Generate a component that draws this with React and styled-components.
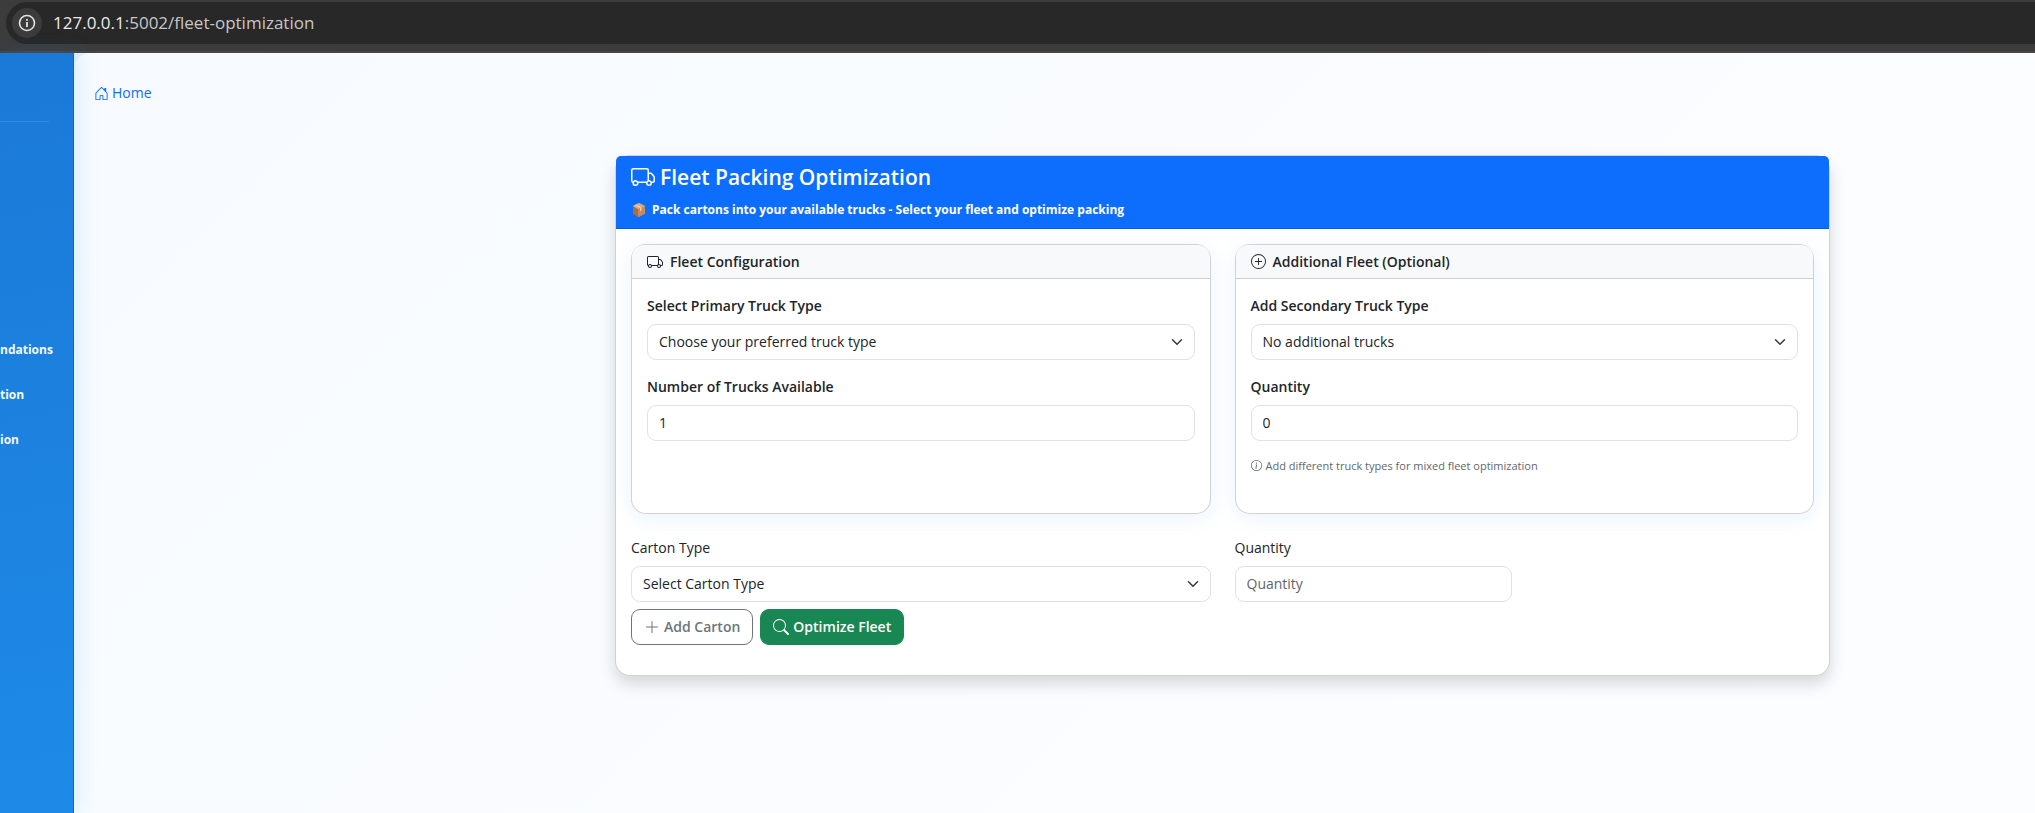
import React from "react";
import styled, { createGlobalStyle } from "styled-components";
import { BsTruck, BsPlusCircle, BsInfoCircle, BsSearch, BsPlusLg, BsHouseDoor } from "react-icons/bs";

const Global = createGlobalStyle`
  *, *::before, *::after { box-sizing: border-box; }
  body {
    margin: 0;
    font-family: "Open Sans", "Noto Sans", sans-serif;
    font-size: 14px;
    line-height: 24px;
    color: #212529;
    background: #e3f2fd;
  }
  button, input, select { font: inherit; color: inherit; }
`;

const Page = styled.div`
  display: flex;
  flex-direction: column;
  min-height: 100vh;
`;

const BrowserBar = styled.header`
  background: #3c3c3c;
  border-bottom: 2px solid #484545;
  padding: 2px 0 7px 6px;
`;

const Address = styled.div`
  display: flex;
  align-items: center;
  gap: 11px;
  height: 42px;
  padding-left: 6px;
  border-radius: 21px 0 0 21px;
  background: #282828;
  color: #c7c7c7;
  font-size: 17px;
`;

const Host = styled.span`
  color: #ececec;
`;

const SiteInfo = styled.button`
  display: grid;
  place-items: center;
  width: 30px;
  height: 30px;
  padding: 0;
  border: 0;
  border-radius: 50%;
  background: #3c3c3c;
  color: #e3e3e3;
`;

const Shell = styled.div`
  flex: 1;
  display: flex;
`;

const Sidebar = styled.nav`
  flex: 0 0 74px;
  border-right: 1px solid #1565c0;
  background: linear-gradient(170deg, #1b79d7 0%, #1e8ae7 100%);
  box-shadow: 4px 0 20px rgba(33, 150, 243, 0.15);
  z-index: 1;
`;

const Brand = styled.div`
  height: 69px;
  margin-right: 24px;
  border-bottom: 1px solid rgba(255, 255, 255, 0.12);
`;

const NavList = styled.ul`
  list-style: none;
  margin: 0;
  padding: 216px 0 0;
`;

const NavItem = styled.li`
  height: 45px;
`;

const NavLink = styled.a`
  display: block;
  color: #f4f9fe;
  font-size: 12px;
  font-weight: 700;
  text-decoration: none;
`;

const Main = styled.main`
  flex: 1;
  min-width: 0;
  padding: 28px 20px 40px;
  border-radius: 16px 0 0 0;
  background: linear-gradient(135deg, #f7fbff 0%, #fcfdff 100%);
`;

const HomeLink = styled.a`
  display: inline-flex;
  align-items: center;
  gap: 3px;
  color: #0d6efd;
  text-decoration: none;
`;

const Columns = styled.div`
  display: grid;
  grid-template-columns: 521fr 1215fr 185fr;
  margin-top: 47px;
`;

const Card = styled.section`
  grid-column: 2;
  border: 1px solid rgba(0, 0, 0, 0.175);
  border-radius: 15px;
  background: #fff;
  box-shadow: 0 8px 16px rgba(0, 0, 0, 0.15);
`;

const CardHeader = styled.header`
  padding: 7px 15px 6px;
  border-bottom: 1px solid #0b5cd5;
  border-radius: 5px 5px 0 0;
  background: #0d6efd;
  color: #fff;
`;

const Title = styled.h1`
  display: flex;
  align-items: center;
  gap: 5px;
  margin: 0 0 6px;
  font-size: 21px;
  font-weight: 600;
  line-height: 29px;
`;

const Subtitle = styled.p`
  display: flex;
  align-items: center;
  gap: 7px;
  margin: 0;
  padding-left: 2px;
  font-size: 12px;
  font-weight: 700;
`;

const Form = styled.form`
  padding: 15px 15px 30px;
`;

const Grid = styled.div`
  display: grid;
  grid-template-columns: repeat(4, 1fr);
  gap: 24px;
`;

const Panel = styled.section`
  grid-column: span 2;
  border: 1px solid rgba(0, 0, 0, 0.175);
  border-radius: 15px;
  background: #fff;
  box-shadow: 0 4px 20px rgba(33, 150, 243, 0.1);
`;

const PanelTitle = styled.h2`
  display: flex;
  align-items: center;
  gap: 7px;
  margin: 0;
  padding: 5px 15px 4px;
  border-bottom: 1px solid rgba(0, 0, 0, 0.175);
  border-radius: 12px 12px 0 0;
  background: #f8f9fb;
  font-size: 14px;
  font-weight: 600;
`;

const PanelBody = styled.div`
  display: flex;
  flex-direction: column;
  gap: 15px;
  min-height: 234px;
  padding: 15px;
`;

const Field = styled.div`
  grid-column: span ${(p) => p.$span || 1};
  display: flex;
  flex-direction: column;
  gap: 6px;
`;

const Label = styled.label`
  font-weight: ${(p) => (p.$strong ? 600 : 400)};
`;

const Input = styled.input`
  width: 100%;
  height: 36px;
  padding: 0 11px;
  border: 1px solid #dee2e6;
  border-radius: 9px;
  background: #fff;
  appearance: textfield;
  &::placeholder { color: #5f656a; opacity: 1; }
  &::-webkit-inner-spin-button { appearance: none; }
`;

const SelectWrap = styled.div`
  position: relative;
`;

const Select = styled(Input)`
  display: block;
  appearance: none;
`;

const Chevron = styled.svg`
  position: absolute;
  right: 12px;
  top: 11px;
  pointer-events: none;
`;

const Hint = styled.p`
  display: flex;
  align-items: center;
  gap: 4px;
  margin: 0;
  font-size: 11px;
  line-height: 20px;
  color: #62686d;
`;

const CartonRow = styled(Grid)`
  margin-top: 22px;
`;

const Actions = styled.div`
  display: flex;
  gap: 7px;
  margin-top: 7px;
`;

const Button = styled.button`
  display: inline-flex;
  align-items: center;
  gap: 4px;
  height: 36px;
  padding: 0 12px;
  border: 1px solid ${(p) => (p.$primary ? "#198754" : "#6c757d")};
  border-radius: 9px;
  background: ${(p) => (p.$primary ? "#198754" : "#fff")};
  color: ${(p) => (p.$primary ? "#fff" : "#6c757d")};
  font-weight: 600;
`;

function PackageIcon() {
  return (
    <svg width="12" height="14" viewBox="0 0 12 14" aria-hidden="true">
      <path d="M6 0 12 3v7.500L6 14 0 10.500V3z" fill="#c68e62" />
      <path d="M5 6v8L0 10.500V3z" fill="#a96d46" />
      <path d="M5 6v8l7-3.500V3z" fill="#c58a5f" />
      <path d="M6 0 12 3 5 6 0 3z" fill="#dcab80" />
      <path d="M3 1.500 8.500 4.500v3L7 8.200V5L1.800 2.200z" fill="#ecd0ad" />
    </svg>
  );
}

function SelectField({ id, label, option, strong, span }) {
  return (
    <Field $span={span}>
      <Label htmlFor={id} $strong={strong}>{label}</Label>
      <SelectWrap>
        <Select as="select" id={id}>
          <option>{option}</option>
        </Select>
        <Chevron width="12" height="14" viewBox="0 0 16 16" aria-hidden="true">
          <path d="m2 5 6 6 6-6" fill="none" stroke="#343a40" strokeWidth="2" strokeLinecap="round" strokeLinejoin="round" />
        </Chevron>
      </SelectWrap>
    </Field>
  );
}

function NumberField({ id, label, strong, ...rest }) {
  return (
    <Field>
      <Label htmlFor={id} $strong={strong}>{label}</Label>
      <Input type="number" id={id} {...rest} />
    </Field>
  );
}

export default function App() {
  return (
    <Page>
      <Global />
      <BrowserBar>
        <Address>
          <SiteInfo type="button" aria-label="Site information">
            <svg width="18" height="18" viewBox="0 0 18 18" aria-hidden="true">
              <circle cx="9" cy="9" r="7.500" fill="none" stroke="currentColor" strokeWidth="1.600" />
              <path d="M9 8v5M9 5v1.800" stroke="currentColor" strokeWidth="1.800" />
            </svg>
          </SiteInfo>
          <span><Host>127.0.0.1</Host>:5002/fleet-optimization</span>
        </Address>
      </BrowserBar>
      <Shell>
        <Sidebar>
          <Brand />
          <NavList>
            <NavItem><NavLink href="#recommendations">ndations</NavLink></NavItem>
            <NavItem><NavLink href="#optimization">tion</NavLink></NavItem>
            <NavItem><NavLink href="#fleet">ion</NavLink></NavItem>
          </NavList>
        </Sidebar>
        <Main>
          <HomeLink href="#home"><BsHouseDoor size={15} />Home</HomeLink>
          <Columns>
            <Card>
              <CardHeader>
                <Title><BsTruck size={24} />Fleet Packing Optimization</Title>
                <Subtitle><PackageIcon />Pack cartons into your available trucks - Select your fleet and optimize packing</Subtitle>
              </CardHeader>
              <Form onSubmit={(e) => e.preventDefault()}>
                <Grid>
                  <Panel>
                    <PanelTitle><BsTruck size={16} />Fleet Configuration</PanelTitle>
                    <PanelBody>
                      <SelectField id="primary" label="Select Primary Truck Type" option="Choose your preferred truck type" strong />
                      <NumberField id="trucks" label="Number of Trucks Available" defaultValue="1" strong />
                    </PanelBody>
                  </Panel>
                  <Panel>
                    <PanelTitle><BsPlusCircle size={15} />Additional Fleet (Optional)</PanelTitle>
                    <PanelBody>
                      <SelectField id="secondary" label="Add Secondary Truck Type" option="No additional trucks" strong />
                      <NumberField id="secondary-qty" label="Quantity" defaultValue="0" strong />
                      <Hint><BsInfoCircle size={11} />Add different truck types for mixed fleet optimization</Hint>
                    </PanelBody>
                  </Panel>
                </Grid>
                <CartonRow>
                  <SelectField id="carton" label="Carton Type" option="Select Carton Type" span={2} />
                  <NumberField id="carton-qty" label="Quantity" placeholder="Quantity" />
                </CartonRow>
                <Actions>
                  <Button type="button"><BsPlusLg size={16} />Add Carton</Button>
                  <Button type="submit" $primary><BsSearch size={16} />Optimize Fleet</Button>
                </Actions>
              </Form>
            </Card>
          </Columns>
        </Main>
      </Shell>
    </Page>
  );
}
